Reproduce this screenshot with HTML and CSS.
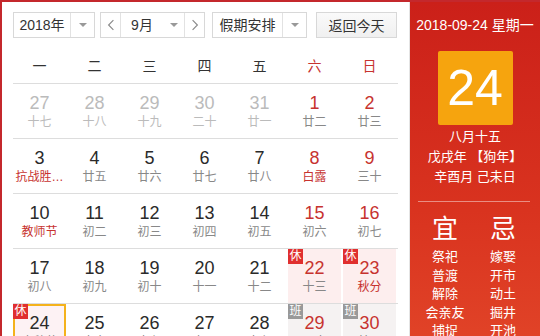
FILE: index.html
```html
<!DOCTYPE html>
<html lang="zh-CN">
<head>
  <meta charset="UTF-8" />
  <title>万年历</title>
  <link rel="stylesheet" href="styles.css">
</head>
<body>
  <div class="calendar">
    <!-- Left: toolbar + month grid -->
    <div class="main">
      <div class="toolbar">
        <div class="select year">
          <span class="val">2018年</span>
          <span class="drop"><i class="arrow"></i></span>
        </div>
        <div class="select month">
          <span class="nav">
            <svg viewBox="0 0 10 14" width="8" height="12"><path d="M8 1L2 7l6 6" fill="none" stroke="#888" stroke-width="1.4"/></svg>
          </span>
          <span class="val">9月</span>
          <span class="drop plain"><i class="arrow"></i></span>
          <span class="nav right">
            <svg viewBox="0 0 10 14" width="8" height="12"><path d="M2 1l6 6-6 6" fill="none" stroke="#888" stroke-width="1.4"/></svg>
          </span>
        </div>
        <div class="select holiday">
          <span class="val">假期安排</span>
          <span class="drop"><i class="arrow"></i></span>
        </div>
        <button class="today-btn">返回今天</button>
      </div>

      <div class="weekdays">
        <span>一</span><span>二</span><span>三</span><span>四</span><span>五</span>
        <span class="weekend">六</span><span class="weekend">日</span>
      </div>

      <div class="weeks">
        <div class="week">
          <div class="day other"><b>27</b><em>十七</em></div>
          <div class="day other"><b>28</b><em>十八</em></div>
          <div class="day other"><b>29</b><em>十九</em></div>
          <div class="day other"><b>30</b><em>二十</em></div>
          <div class="day other"><b>31</b><em>廿一</em></div>
          <div class="day weekend"><b>1</b><em>廿二</em></div>
          <div class="day weekend"><b>2</b><em>廿三</em></div>
        </div>
        <div class="week">
          <div class="day"><b>3</b><em class="fest">抗战胜…</em></div>
          <div class="day"><b>4</b><em>廿五</em></div>
          <div class="day"><b>5</b><em>廿六</em></div>
          <div class="day"><b>6</b><em>廿七</em></div>
          <div class="day"><b>7</b><em>廿八</em></div>
          <div class="day weekend"><b>8</b><em class="fest">白露</em></div>
          <div class="day weekend"><b>9</b><em>三十</em></div>
        </div>
        <div class="week">
          <div class="day"><b>10</b><em class="fest">教师节</em></div>
          <div class="day"><b>11</b><em>初二</em></div>
          <div class="day"><b>12</b><em>初三</em></div>
          <div class="day"><b>13</b><em>初四</em></div>
          <div class="day"><b>14</b><em>初五</em></div>
          <div class="day weekend"><b>15</b><em>初六</em></div>
          <div class="day weekend"><b>16</b><em>初七</em></div>
        </div>
        <div class="week">
          <div class="day"><b>17</b><em>初八</em></div>
          <div class="day"><b>18</b><em>初九</em></div>
          <div class="day"><b>19</b><em>初十</em></div>
          <div class="day"><b>20</b><em>十一</em></div>
          <div class="day"><b>21</b><em>十二</em></div>
          <div class="day weekend rest"><span class="tag">休</span><b>22</b><em>十三</em></div>
          <div class="day weekend rest"><span class="tag">休</span><b>23</b><em class="fest">秋分</em></div>
        </div>
        <div class="week">
          <div class="day rest today"><span class="tag">休</span><b>24</b><em>中秋节</em></div>
          <div class="day"><b>25</b><em>十六</em></div>
          <div class="day"><b>26</b><em>十七</em></div>
          <div class="day"><b>27</b><em>十八</em></div>
          <div class="day"><b>28</b><em>十九</em></div>
          <div class="day weekend work"><span class="tag">班</span><b>29</b><em>二十</em></div>
          <div class="day weekend work"><span class="tag">班</span><b>30</b><em>廿一</em></div>
        </div>
      </div>
    </div>

    <!-- Right: today detail panel -->
    <div class="side">
      <div class="side-date">2018-09-24 星期一</div>
      <div class="big-day">24</div>
      <div class="lunar">
        <p>八月十五</p>
        <p>戊戌年 【狗年】</p>
        <p>辛酉月 己未日</p>
      </div>
      <div class="yiji">
        <div class="col">
          <h3>宜</h3>
          <p>祭祀</p><p>普渡</p><p>解除</p><p>会亲友</p><p>捕捉</p>
        </div>
        <div class="col">
          <h3>忌</h3>
          <p>嫁娶</p><p>开市</p><p>动土</p><p>掘井</p><p>开池</p>
        </div>
      </div>
    </div>
  </div>
</body>
</html>
```

FILE: styles.css
```css
* {
  margin: 0;
  padding: 0;
  box-sizing: border-box;
}

body {
  font-family: "Liberation Sans", "Noto Sans CJK SC", sans-serif;
  background: #fff;
  color: #333;
  width: 540px;
  height: 336px;
  overflow: hidden;
}

.calendar {
  display: flex;
  border-top: 2px solid #c4282c;
  border-left: 2px solid #c4282c;
  height: 380px;
}

/* Left part */
.main {
  width: 408px;
  padding: 10px 0 0 11px;
  border-right: 1px solid #e4e4e4;
}

.toolbar {
  display: flex;
  height: 26px;
  font-size: 14px;
  color: #333;
}

.select {
  display: flex;
  align-items: center;
  border: 1px solid #d8d8d8;
  height: 26px;
  background: #fff;
}

.select .val {
  line-height: 24px;
}

.select .drop {
  height: 100%;
  display: flex;
  align-items: center;
  justify-content: center;
  border-left: 1px solid #e2e2e2;
}

.select .drop.plain {
  border-left: none;
}

.arrow {
  width: 0;
  height: 0;
  border-left: 4px solid transparent;
  border-right: 4px solid transparent;
  border-top: 4px solid #999;
}

.year {
  width: 82px;
}

.year .val {
  width: 56px;
  text-align: center;
}

.year .drop {
  width: 24px;
}

.month {
  width: 105px;
  margin-left: 5px;
}

.month .nav {
  width: 20px;
  height: 100%;
  display: flex;
  align-items: center;
  justify-content: center;
  border-right: 1px solid #e2e2e2;
}

.month .nav.right {
  border-right: none;
  border-left: 1px solid #e2e2e2;
}

.month .val {
  width: 42px;
  text-align: center;
}

.month .drop {
  width: 21px;
}

.holiday {
  width: 95px;
  margin-left: 7px;
}

.holiday .val {
  width: 69px;
  text-align: center;
}

.holiday .drop {
  width: 24px;
}

.today-btn {
  margin-left: 9px;
  width: 81px;
  height: 26px;
  border: 1px solid #d8d8d8;
  background: linear-gradient(#fafafa, #f0f0f0);
  font-family: inherit;
  font-size: 14px;
  color: #333;
}

/* Week header */
.weekdays {
  display: grid;
  grid-template-columns: repeat(7, 53px);
  column-gap: 2px;
  width: 385px;
  padding: 20px 0 9px;
  border-bottom: 1px solid #ddd;
  font-size: 14px;
  line-height: 16px;
  text-align: center;
  color: #333;
}

.weekdays .weekend {
  color: #c7332f;
}

/* Days */
.week {
  display: grid;
  grid-template-columns: repeat(7, 53px);
  column-gap: 2px;
  width: 385px;
  border-bottom: 1px solid #ddd;
}

.day {
  position: relative;
  height: 54px;
  display: flex;
  flex-direction: column;
  align-items: center;
  padding-top: 9px;
}

.day b {
  font-weight: normal;
  font-size: 18px;
  line-height: 20px;
  color: #2a2a2a;
}

.day em {
  font-style: normal;
  font-size: 12px;
  line-height: 16px;
  margin-top: 1px;
  color: #888;
}

.day.other b,
.day.other em {
  color: #bbb;
}

.day.weekend b {
  color: #c7332f;
}

.day em.fest {
  color: #c7332f;
}

.day.rest {
  background: #fdeeee;
}

.day.work {
  background: #f5f2f2;
}

.day.today {
  border: 2px solid #f4b21c;
  background: #fdf2f4;
  padding-top: 7px;
}

.tag {
  position: absolute;
  top: 0;
  left: 0;
  width: 15px;
  height: 15px;
  font-size: 12px;
  line-height: 15px;
  text-align: center;
  color: #fff;
  background: #e02f2f;
}

.day.today .tag {
  top: -2px;
  left: -2px;
}

.day.work .tag {
  background: #999;
}

/* Right panel */
.side {
  flex: 1;
  background: linear-gradient(#cb2019, #d9331f 55%, #e3482a);
  color: #fff;
  text-align: center;
}

.side-date {
  font-size: 14px;
  line-height: 18px;
  margin-top: 14px;
  white-space: nowrap;
}

.big-day {
  width: 75px;
  height: 74px;
  margin: 17px auto 0;
  background: #f6a40e;
  border-radius: 2px;
  font-size: 50px;
  line-height: 74px;
  color: #fff;
}

.lunar {
  margin-top: 2px;
  font-size: 13px;
  line-height: 20px;
}

.yiji {
  display: flex;
  justify-content: center;
  gap: 18px;
  margin: 14px 10px 0 8px;
  padding-top: 10px;
  border-top: 1px solid rgba(255, 255, 255, 0.45);
}

.yiji .col {
  width: 40px;
}

.yiji h3 {
  font-weight: normal;
  font-size: 26px;
  line-height: 34px;
  margin-bottom: 2px;
}

.yiji p {
  font-size: 13px;
  line-height: 18.5px;
}
```
